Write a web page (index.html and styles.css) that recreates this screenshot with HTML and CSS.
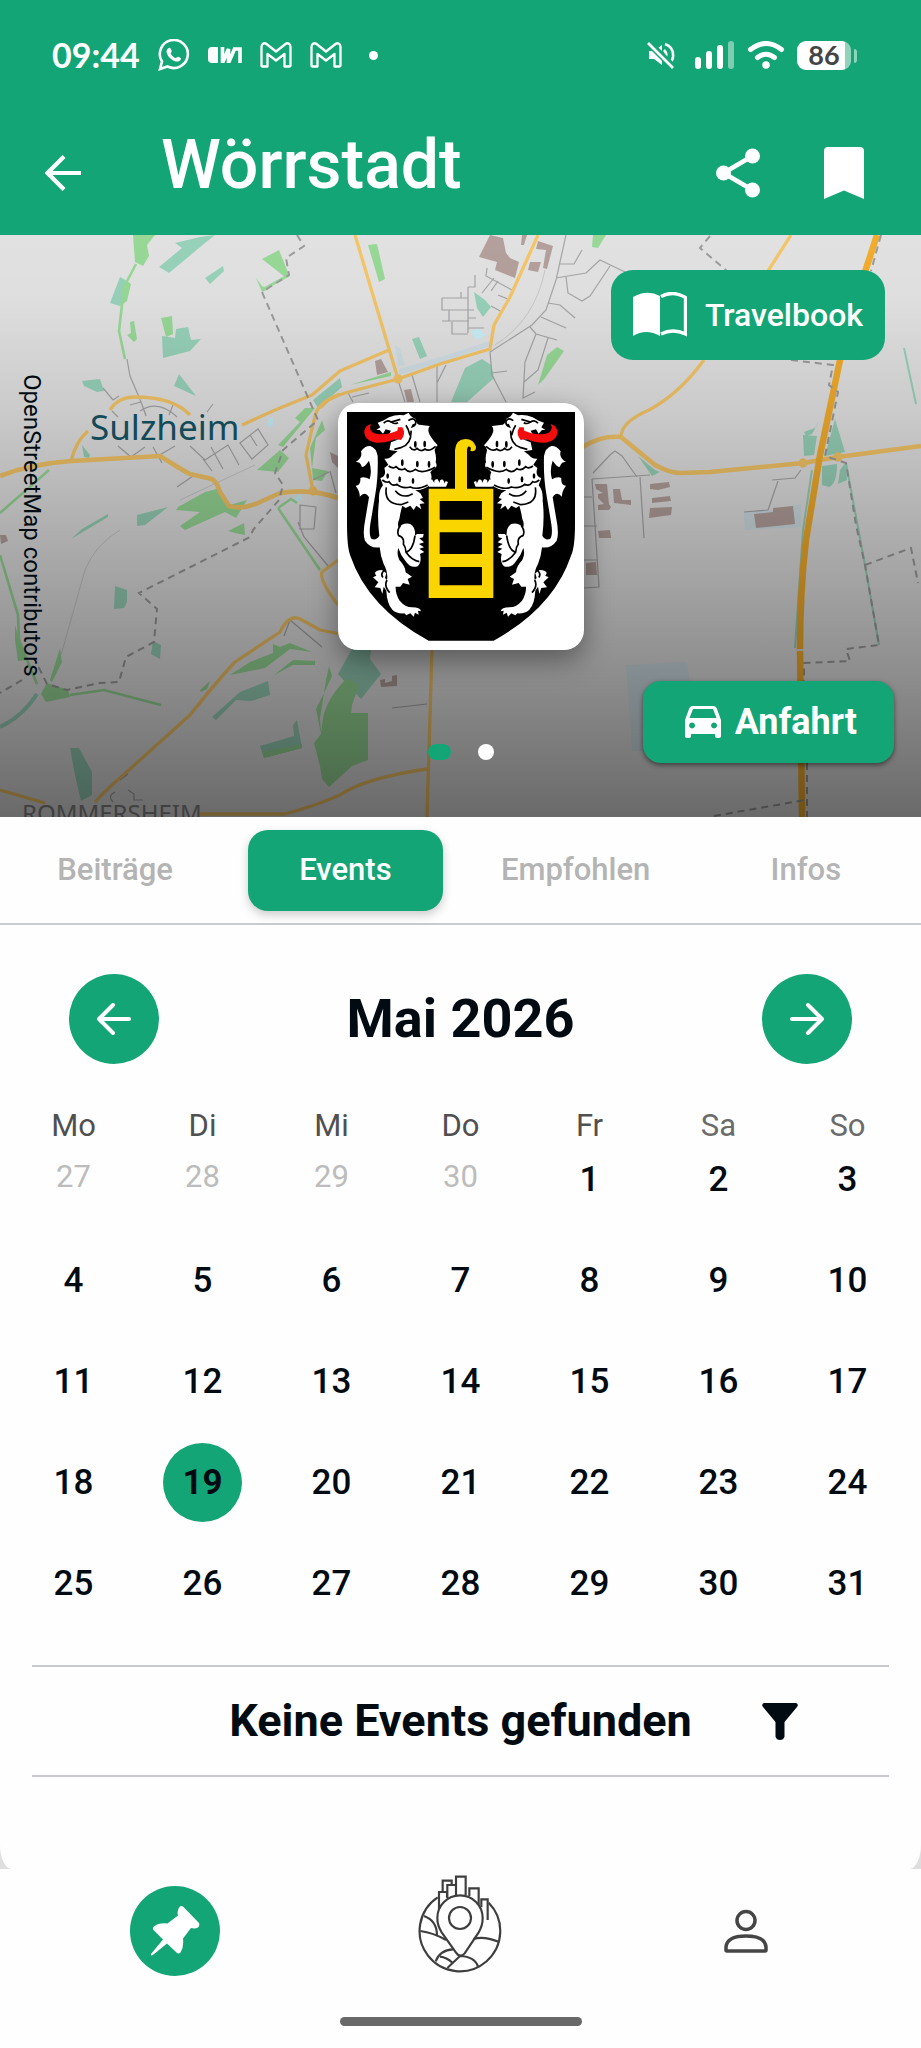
FILE: index.html
```html
<!DOCTYPE html>
<html lang="de">
<head>
<meta charset="utf-8">
<meta name="viewport" content="width=device-width, initial-scale=1">
<title>Wörrstadt</title>
<link rel="stylesheet" href="styles.css">
</head>
<body>
<header class="top">
  <div class="status">
    <div class="status-group">
      <span class="clock">09:44</span>
      <svg width="32" height="32" viewBox="0 0 32 32" fill="none" stroke="#fff" stroke-width="2.6"><path d="M2 30l2-7.500a14 14 0 1 1 5.500 5z"/><path d="M10 9.500c2-2 3 .5 3.700 2.500.4 1-1.300 2-.9 2.800 1 2 2.500 3.300 4.500 4.200 1 .4 1.900-1.800 3-1.300 2.600 1.200 3.500 1.600 2 3.500-1.600 2-5 1.500-7.500 0-3-1.800-5-4.200-6-7-.6-2-.2-3.500 1.200-4.700z" fill="#fff" stroke="none"/></svg>
      <svg width="34" height="16" viewBox="0 0 34 16" fill="#fff"><path d="M4 0h6v16H4a4 4 0 0 1-4-4V4a4 4 0 0 1 4-4z"/><path d="M14.500 0v16l6-14v14l6-14h5.500v14" fill="none" stroke="#fff" stroke-width="3.600"/></svg>
      <svg width="32" height="26" viewBox="0 0 32 26" fill="none" stroke="#fff" stroke-width="2.300" stroke-linejoin="round"><path d="M1.500 23V5c0-3.500 3-4.500 5-3L16 9.500 25.500 2c2-1.500 5-.5 5 3v18.500q0 1-1 1h-5V12L16 18.500 7.500 12v12.500h-5q-1 0-1-1z"/></svg>
      <svg width="32" height="26" viewBox="0 0 32 26" fill="none" stroke="#fff" stroke-width="2.300" stroke-linejoin="round"><path d="M1.500 23V5c0-3.500 3-4.500 5-3L16 9.500 25.500 2c2-1.500 5-.5 5 3v18.500q0 1-1 1h-5V12L16 18.500 7.500 12v12.500h-5q-1 0-1-1z"/></svg>
      <span class="more-dot"></span>
    </div>
    <div class="status-group status-right">
      <svg width="28" height="28" viewBox="0 0 28 28" fill="none" stroke="#fff" stroke-width="2.600"><path d="M2 10h5l8-6v20l-8-6H2z" fill="#fff" stroke="none"/><path d="M17 9q4 4 1 9M18 3q9 3 8 13-.5 3-2 5"/><path d="M0 0l28 28" stroke="#14a576" stroke-width="7"/><path d="M1 2l25 25"/></svg>
      <svg class="signal" width="40" height="28" viewBox="0 0 40 28" fill="#fff"><rect x="0" y="16" width="6" height="12" rx="3"/><rect x="11" y="10" width="6" height="18" rx="3"/><rect x="22" y="4" width="6" height="24" rx="3"/><rect x="33" y="0" width="6" height="28" rx="3" opacity=".45"/></svg>
      <svg width="38" height="28" viewBox="0 0 38 28" fill="none" stroke="#fff" stroke-width="5" stroke-linecap="round"><path d="M3.500 8.500q15.500-12 31 0M10.500 16.500q8.500-6.500 17 0"/><circle cx="19" cy="24" r="3.800" fill="#fff" stroke="none"/></svg>
      <span class="battery"><span class="battery-level">86</span></span>
    </div>
  </div>
  <div class="appbar">
    <button class="icon-btn back" aria-label="Zurück"><svg width="36" height="36" viewBox="0 0 36 36" fill="none" stroke="#fff" stroke-width="4.200"><path d="M36 18H3M19 1.500L2.500 18 19 34.500"/></svg></button>
    <h1>Wörrstadt</h1>
    <button class="icon-btn" aria-label="Teilen"><svg width="44" height="50" viewBox="0 0 44 50" fill="#fff"><path d="M36.500 8L7.500 25l29 17" fill="none" stroke="#fff" stroke-width="4.600"/><circle cx="36.500" cy="8" r="7.500"/><circle cx="7.500" cy="25" r="7.500"/><circle cx="36.500" cy="42" r="7.500"/></svg></button>
    <button class="icon-btn" aria-label="Merken"><svg width="40" height="52" viewBox="0 0 40 52" fill="#fff"><path d="M4 0h32q4 0 4 4v48l-20-8.500L0 52V4q0-4 4-4z"/></svg></button>
  </div>
</header>

<main>
<section class="hero">
  <svg class="map" viewBox="0 235 921 582" aria-label="Karte">
    <defs><linearGradient id="shade" x1="0" y1="0" x2="0" y2="1"><stop offset="0" stop-opacity="0"/><stop offset=".1" stop-opacity=".01"/><stop offset=".3" stop-opacity=".1"/><stop offset=".5" stop-opacity=".22"/><stop offset=".75" stop-opacity=".37"/><stop offset="1" stop-opacity=".53"/></linearGradient></defs>
    <rect y="235" width="921" height="582" fill="#e1e1e1"/>
    <g fill="#d0dfe5"><path d="M395 345l5 3 5 17-7 1zM626 665l61-3 3 20-40 1-5 68h-13zM744 512l29-2 28-6v23l-56 3z"/><path d="M399 369l48-14 46-15v5l-48 16-46 14z"/></g>
    <g fill="#c9eef7"><path d="M471 332l7-4 8 7-9 5zM268 419l5-2v8l-5 3zM295 497l6-3v6l-5 2zM48 694l8-1-1 5h-7z"/></g>
    <g fill="#97d1b9">
      <path d="M175 243l25-6 15-2-10 8-36 30-10-6 23-19zM223 266l1 5-14 13-5-6zM120 277l7 4-7 25-10-3zM162 336l13 2 1-9 12-2 3 13 10-1-11 12-27 7zM82 381l18-2 4 12-7 1-13-6zM179 374l17 22-22-10zM313 400l27-22 2 9-24 21zM82 445l8 10-1 3-5-1zM137 515l31-8-23 18-8 1zM82 529l26-15v3l-37 22zM474 292l11 8 6 7-8 10-6-9zM412 339l7-2 8 19-7 3zM451 402l14-34 17-9 9 6 3 13-27 24z"/>
      <path d="M804 432l11-4 6-10-9 16-6 2zM803 435l14 1-3 19-10 1zM835 419l10 33-20 4zM822 466l15-2q0 20-8 23l-7-2zM840 470l6-8 1 18-9 4zM638 456l17 14 5 2-8 4z"/>
      <path d="M115 586l12 4v12l-3 6-10 1zM153 641l8 4-1 14-9-5zM70 748h9l13 24v23l-11 6-6-26zM212 717l28-25 28-11 2 14-19 6-15-1-20 20zM260 746l34-10-1-11 4-5 5 28-38 10zM352 649h19l-1 10 11 15-20 25-23-25z"/>
      <path d="M0 727q22-10 37-33" fill="none" stroke="#97d1b9" stroke-width="4"/>
      <path d="M904 348l12 56M846 463l19 102 14 80M812 470l-9 60-8 118" fill="none" stroke="#97d1b9" stroke-width="2"/>
    </g>
    <g fill="#97d896">
      <path d="M133 235h22l-8 10 2 11-6 10-8-4zM127 281l4 3-4 17-7 5zM130 322l4-1 3 18-3 3-7-7 4-2zM161 318l11-2 1 18-7 3zM262 259l17-9 10 25-4 2zM256 278l6 8 7 3-7 3zM368 245l9-1 8 35-6 3zM593 235h13l-8 13-6-1zM538 385l9-30 10-8 7 4-19 27zM350 385l41-13v4zM295 418l10-10 10 0-32 39-5-2 22-23zM257 470l23-20 9 8-11 14zM322 420l3 10-9 8-4 30-2-20zM312 468l16 3-6 10-9-1zM178 507l27-15 12-3 13 16 17-5-11 18-11-6-40 18-5-4 20-14-24-2zM228 531l16-8 1 12-10-2zM15 625l5 17 7 18-9 1-3-21zM50 680l10-32 2 14-10 20zM41 694l6-11 21 7 2 7-24 5zM200 690l10-9-3 8-6 3zM230 675l20-13 23-9v-9l7 3 10-4 22 9-22-3-25 19zM274 675l19-15 22 1v4l-22 0zM262 752l40-8v4l-38 10zM329 666l3 10-6 13-10 20 5 25-7 9 6 23 2 13 7 8 23-21 16-6v-47h-17l1-8 7-20-12-7q-20 20-24 40l-2 15-1-15 6-38z"/>
      <path d="M136 264l-12 23-5 44 6 28M289 275l-27 15M0 513l49-43M278 508l13-9 6 4M278 508l42 62M0 555l18 60 1 25 18 44M70 695l34-5 57 15" fill="none" stroke="#97d896" stroke-width="2.600"/>
    </g>
    <g fill="#b3a09c"><path d="M490 235l13 3 3 15 4 5 9 4-4 16-20-8 2-8-18-5zM538 241l15 5-6 23-4-1 3-18-10-1zM530 262l11 0-3 10-10-2zM522 235h5l-3 10h-3zM375 361l6-2 7 13-11 3zM404 390l7-1 3 13h-7zM595 484h12l2 20 2 3-2 3-11 0v-5l6-1-6-6v-4l5-1-7-4zM613 489h7l2 11 9 0v5l-17-2zM650 484l19-2 1 5-12 3-8-1zM652 498l18-2 1 5-19 2zM650 508l22-1-1 8-22 3zM754 514l19-2V508l20-2 2 18-39 4zM598 531l12-1 1 8-12 0zM586 563l10-1 1 13h-11zM380 680l5-1v4l7-2v-5l5-1v11l-16 1zM330 452l8 4v12l-6-6zM0 535l6 0 2 6-7 3z"/></g>
    <g fill="none" stroke="#a5a5a8" stroke-width="1.200">
      <path d="M127 359l3 17 9 21 7 18M103 388l10 12 6-4M130 405l11-3 5 14M140 411q18-12 37 6M173 405l-4 10M207 412l6-8M112 411l6 6M118 446l13 11 14-10M153 447l9 16M158 456l17-10M190 446l15 14 23-15 11 20M203 459l9 12M211 447l12 22M240 443l18-14 10 16-16 14zM250 435l7 11M177 487l16-11M313 480l16-8M330 471l6 22M300 505l16 2-2 22-14 0zM298 522l6 15 25 30"/>
      <path d="M566 235l-10 45-10 30-14 15-42 27 2 23 14 27M556 278l30-5 14-13 25 12M566 277l2 16 14 8 8-5 20-30M560 264l14 0 8-14M548 303l12 2 15 13M541 317l25 11M530 327l6 7 21 6M536 334l-11 28-2 36 12-6M548 338l-10 32-14 12M492 373l15-2M468 287v46M442 298h26M442 298v12h32M449 310v11h20M442 321h7M452 322v12h16M468 318h8M468 328h16M475 275v12h-7M487 268l-1 8 26 14M494 278l-12 15M498 281l-7 10M498 295l12 5M491 306l11 6M461 292v6M398 380l7 22M412 375l8 27M437 366v36M446 365l-9 18M348 393l5 9M352 397l17-4"/>
      <path d="M593 473l17-18 5-4 7 5 15 21M592 479l58-4M592 479l7 108-16 1M640 477l4 61M772 480l23-2 6-8M778 481l-10 29-24 2M583 560h14M592 497h-9M583 526h14M290 620l32 27M290 620l-6 16M392 708l35-4M115 792q-8 4-2 10M128 790l6 4v6l9 0M120 780l8-6"/>
    </g>
    <g fill="none" stroke="#c7c7c7"><path d="M61 655L85 570q10-25 35-40M180 500l75-35M495 345q40-25 50-75"/></g>
    <g fill="none" stroke="#f4c566" stroke-width="3.300" stroke-linejoin="round">
      <path d="M110 410q8-13 25-13 38 0 55 18M88 431q-12 10-17 30M242 425l33-15 37-15 28-24 49-21M340 394q-22 8-25 22l-9 39 7 36M355 235l43 144M320 408q8-10 25-15l53-14 42-15 50-15 4-24 16-28 28-62M791 235l-23 36M704 360q-25 34-55 50-28 12-28 27M338 560l-16 12q-3 8 16 33M0 790l45 13M95 802q13-14 25-24l70-63q28-35 45-53l45-30q10-20 22-12l18 10 20 4M432 649l-5 168M200 814h85q27-7 55-19 25-17 87-26"/>
      <g stroke-width="4.600"><path d="M0 476q30-12 71-15l89-5q22 14 30 18l22 5q5 3 8 13l9 14q15 4 31-4l20-9q30-5 58 5M583 447q18-12 38-10l34 28q15 8 25 8l30-1 93-9 35-6 83-11"/></g>
      <circle cx="398" cy="379" r="3"/><circle cx="803" cy="463" r="3"/><circle cx="838" cy="457" r="3"/><circle cx="313" cy="491" r="3"/>
    </g>
    <path d="M877 235l-12 37-25 88-20 95-14 85q-6 50-6 110l2 167" fill="none" stroke="#f2ac2c" stroke-width="6.500"/>
    <path d="M797 650h7" stroke="#ddd" stroke-width="2"/>
    <g fill="none" stroke="#9b9b9b" stroke-width="2" stroke-dasharray="7 5"><path d="M297 235l7 11-18 12 3 17-27 17 51 117 5 11-35 30-8 23 8 12-4 15-26 30-3 7-111 56 18 16-3 33-28 15-7 25-19 1-33 7-20-6-10-20M22 680l-22 13M881 235l-10 36M710 236l-10 12 27 23M791 360l42 5-4 20 9 7-13 64 21 7 10 62 9 40 14 80-33 4 4 12-46 2v20M865 565l46-17 7 35M807 763v54M714 816l91-16"/></g>
    <text x="22" y="822" class="map-village">ROMMERSHEIM</text>
    <rect y="235" width="921" height="582" fill="url(#shade)"/>
    <text x="90" y="440" class="map-town">Sulzheim</text>
  </svg>
  <p class="attribution">OpenStreetMap contributors</p>
  <button class="travelbook">
    <svg width="54" height="46" viewBox="0 0 54 46"><path d="M0 5Q14-3 27 4V44Q13 36 0 44z" fill="#fff"/><path d="M28 4.500Q40-2 52.500 5.500V42Q40 36 28 42" fill="none" stroke="#fff" stroke-width="3.400"/></svg>
    Travelbook
  </button>
  <div class="crest">
    <svg viewBox="80 64 684 686" aria-label="Wappen Wörrstadt">
      <path d="M80 64H764V400Q764 470 752 495Q700 650 520 750H325Q142 650 90 495Q80 470 80 400z"/>
      <g id="lion">
        <path fill="#fff" d="M265 66Q270 78 285 84Q287 98 296 102L328 106Q320 118 328 132Q335 145 352 164Q340 172 344 184Q349 200 346 214Q352 226 345 232Q336 236 330 245Q336 255 332 268L328 284Q308 300 285 298L300 308 308 322 298 325 313 338 298 340 303 356 288 345 280 358 270 345 256 352 246 345Q240 365 237 385Q230 400 235 412Q248 395 270 400Q286 410 284 435L290 430 310 430 308 440 297 443 311 455 296 460 311 470 297 474 312 484 299 490Q305 515 292 527Q270 534 255 510Q240 492 234 472Q228 490 237 508Q256 528 256 545L275 558 262 565 268 582 248 577 240 588 226 588Q225 610 238 630Q255 650 275 650Q300 650 302 662L293 660 295 672 284 666 280 678 270 668 258 674 252 668Q230 670 216 657Q200 640 198 600L190 588 186 610 180 592 163 590 174 575 158 560 168 555Q155 540 185 538L198 548 194 562 200 568Q204 545 190 520Q180 495 178 470Q150 474 134 450Q126 430 135 385L146 320Q135 300 118 318Q120 305 106 285Q122 285 120 262Q132 256 148 266Q156 240 146 210Q125 240 122 222Q118 212 106 214Q128 202 122 182Q134 165 150 166Q168 172 172 196Q174 260 165 310L150 400Q145 435 154 445Q168 450 177 435Q170 380 176 330Q174 300 188 284L180 262Q200 258 192 232L204 222 192 204Q208 206 218 192L232 182 207 178 212 155 238 145Q215 148 205 142Q205 128 212 120L196 116 188 129 178 118 168 118 180 110 172 96 188 90 206 80Q230 70 250 74z"/>
        <path fill="#fff" d="M326 288Q320 270 335 266L342 277Q340 264 352 266L358 277Q357 265 368 267L374 279Q372 268 383 274L377 288z"/>
        <path fill="none" stroke="#000" stroke-width="5" d="M190 98q10-12 22-4l28-8M213 94q8 8 20 2M264 90q15-12 22 2 2 12-10 16l4-8M272 120q2 40-28 50l-22 6M257 104q8 12 12 30M268 168q12 16 22 5 12 12 24 2 12 10 32-8M205 226q14 10 22 2 12 14 26 6 15 16 32 2 20 16 60-6M186 268q12 10 20 5 10 16 24 8 15 14 40 8 20 10 52-6M198 290q-8 50 44 52l22-8M225 300q15 20 40 15l12-6M240 405q-12 15-5 30 18 5 14 25 8 10 8 25 18 25 40 28M284 435q-6 45-28 50M190 540q-10 12-2 20M200 568q-10 18 8 38"/>
        <g><ellipse cx="246" cy="216" rx="4" ry="10"/><ellipse cx="291" cy="220" rx="4" ry="10"/><ellipse cx="326" cy="221" rx="4" ry="10"/><ellipse cx="285" cy="161" rx="4" ry="10"/><ellipse cx="313" cy="160" rx="4" ry="10"/><ellipse cx="202" cy="256" rx="4" ry="8"/><ellipse cx="238" cy="266" rx="4" ry="9"/><ellipse cx="278" cy="271" rx="4" ry="9"/></g>
        <path fill="#f30d0d" d="M246 110Q258 130 242 148L226 144Q200 157 168 156Q130 149 132 120Q136 104 152 100Q144 116 158 126Q180 135 212 127L231 120 233 110z"/>
      </g>
      <use href="#lion" transform="matrix(-1 0 0 1 843 0)"/>
      <path fill="#fbd500" fill-rule="evenodd" d="M325 294H404V178Q406 146 436 145Q460 146 467 168Q468 184 450 181Q455 166 443 168Q440 172 440 182V294H519V622H325zM358 331V387H485V331zM358 425V490H485V425zM358 529V584H485V529z"/>
    </svg>
  </div>
  <div class="dots"><span class="dot-active"></span><span class="dot"></span></div>
  <button class="directions">
    <svg width="36" height="32" viewBox="0 0 36 32"><path fill="#fff" fill-rule="evenodd" d="M8 0h20q3 0 4 3l4 11v16q0 2-2 2h-2q-2 0-2-2v-2H6v2q0 2-2 2H2q-2 0-2-2V14L4 3q1-3 4-3zM8 3L4.500 12h27L28 3zM7 16.500a3 3 0 1 0 .1 0zM29 16.500a3 3 0 1 0 .1 0z"/></svg>
    Anfahrt
  </button>
</section>

<nav class="tabs" aria-label="Bereiche">
  <button>Beiträge</button>
  <button class="active">Events</button>
  <button>Empfohlen</button>
  <button>Infos</button>
</nav>

<div class="content">
<section class="calendar">
  <div class="month">
    <button class="round" aria-label="Vorheriger Monat"><svg width="34" height="34" viewBox="0 0 34 34" fill="none" stroke="#fff" stroke-width="4" stroke-linecap="round" stroke-linejoin="round"><path d="M32 17H2M16 3L2 17l14 14"/></svg></button>
    <h2>Mai 2026</h2>
    <button class="round" aria-label="Nächster Monat"><svg width="34" height="34" viewBox="0 0 34 34" fill="none" stroke="#fff" stroke-width="4" stroke-linecap="round" stroke-linejoin="round"><path d="M2 17h30M18 3l14 14-14 14"/></svg></button>
  </div>
  <table class="days">
    <thead><tr><th>Mo</th><th>Di</th><th>Mi</th><th>Do</th><th>Fr</th><th class="weekend">Sa</th><th class="weekend">So</th></tr></thead>
    <tbody>
      <tr><td><button class="muted">27</button></td><td><button class="muted">28</button></td><td><button class="muted">29</button></td><td><button class="muted">30</button></td><td><button>1</button></td><td><button>2</button></td><td><button>3</button></td></tr>
      <tr><td><button>4</button></td><td><button>5</button></td><td><button>6</button></td><td><button>7</button></td><td><button>8</button></td><td><button>9</button></td><td><button>10</button></td></tr>
      <tr><td><button>11</button></td><td><button>12</button></td><td><button>13</button></td><td><button>14</button></td><td><button>15</button></td><td><button>16</button></td><td><button>17</button></td></tr>
      <tr><td><button>18</button></td><td><button class="today">19</button></td><td><button>20</button></td><td><button>21</button></td><td><button>22</button></td><td><button>23</button></td><td><button>24</button></td></tr>
      <tr><td><button>25</button></td><td><button>26</button></td><td><button>27</button></td><td><button>28</button></td><td><button>29</button></td><td><button>30</button></td><td><button>31</button></td></tr>
    </tbody>
  </table>
</section>
<section class="results">
  <h3>Keine Events gefunden</h3>
  <button class="filter" aria-label="Filtern"><svg width="36" height="37" viewBox="0 0 36 37" fill="#020b12"><path d="M2 0h32q3 1 1 4L22.500 19v14.500q-1 3.500-4.500 3.500t-4.500-3.500V19L1 4Q-1 1 2 0z"/></svg></button>
</section>
</div>
</main>

<footer class="bottom">
  <nav class="bottom-nav" aria-label="Hauptmenü">
    <a class="round" href="#orte" aria-label="Orte"><svg width="50" height="50" viewBox="0 0 50 50" fill="#fff"><path d="M30 0.500Q32-.5 33.500 1L49 17Q50 20 48 21.500 45 23 41 22L33 32.500Q34 41 30.500 46.500 28.500 48.500 26.500 46.500L17 37.500 3.500 48.500Q.5 50.500 1 48L13 33.500 3.500 24Q2 22 4 20.500 9 16.500 17.500 17.500L28 9.500Q26.500 4 30 .5z"/></svg></a>
    <a class="globe" href="#karte" aria-label="Karte"><svg width="84" height="100" viewBox="84 40 252 300" fill="none" stroke="#3e3e3e" stroke-width="6.500"><path d="M143 110A121 121 0 1 0 296 126"/><path d="M210 285Q203 284 198 276L155 215Q142 195 142 172A68 68 0 0 1 278 172Q278 195 266 215L224 278Q218 285 210 285z"/><circle cx="210" cy="172" r="33"/><path d="M147 145V94H171V110M158 93V60H185V72M172 112V73H198V104M198 104V48H227V104M238 106V83H266V132M274 140V116H293V178M102 166Q140 180 141 222M91 211Q130 216 168 238M250 235Q280 225 326 243M189 266Q150 268 137 302M150 288Q170 290 187 306M172 322L210 286Q255 288 264 318"/></svg></a>
    <a href="#profil" aria-label="Profil"><svg width="44" height="44" viewBox="0 0 44 44" fill="none" stroke="#454545" stroke-width="3.500"><circle cx="22" cy="11.500" r="9"/><path d="M2 41V38Q3 27 22 27T42 38V41Q42 42 41 42H3Q2 42 2 41z"/></svg></a>
  </nav>
  <div class="home-bar"></div>
</footer>
</body>
</html>
```
FILE: styles.css
```css
:root { --green: #14a576; --ink: #020b12; --line: #c9c9d0; }
* { box-sizing: border-box; }
body { margin: 0; min-height: 100vh; display: flex; flex-direction: column; background: #fefefe; color: var(--ink); font-family: Roboto, "Liberation Sans", sans-serif; }
h1, h2, h3, p { margin: 0; }
button { font: inherit; color: inherit; background: none; border: 0; padding: 0; }
svg { display: block; flex: none; }

.top { background: var(--green); color: #fff; }
.status { display: flex; justify-content: space-between; align-items: center; height: 110px; padding: 0 70px 0 52px; }
.status-group { display: flex; align-items: center; gap: 18px; }
.status-right { gap: 12px; }
.signal { margin-left: 8px; }
.clock { font: bold 34px/40px Lato, sans-serif; }
.more-dot { width: 9px; height: 9px; margin-left: 9px; border-radius: 50%; background: #fff; }
.battery { position: relative; width: 54px; height: 29px; border-radius: 9px; background: linear-gradient(90deg, #fff 88%, #8fd3bb 88%); color: #444; text-align: center; }
.battery::after { content: ""; position: absolute; right: -6px; top: 8px; width: 3px; height: 14px; border-radius: 0 3px 3px 0; background: #8fd3bb; }
.battery-level { display: block; font: bold 27px/28px Lato, sans-serif; }
.appbar { display: flex; align-items: center; height: 125px; padding: 0 57px 0 45px; gap: 64px; }
.appbar h1 { flex: 1; padding: 0 0 16px 16px; font-size: 68px; line-height: 80px; font-weight: 500; }

.hero { position: relative; }
.map { width: 100%; height: auto; }
.map-town { font: 35px "Noto Sans", sans-serif; fill: #134a58; }
.map-village { font: 24px "Noto Sans", sans-serif; fill: #858585; }
.attribution { position: absolute; left: 18px; top: 139px; writing-mode: vertical-rl; font-size: 24px; line-height: 28px; }
.travelbook, .directions { position: absolute; display: flex; align-items: center; justify-content: center; background: var(--green); color: #fff; }
.travelbook { top: 35px; right: 36px; height: 90px; padding: 0 22px; gap: 18px; border-radius: 22px; font-size: 32px; font-weight: 500; }
.directions { right: 27px; bottom: 54px; height: 82px; padding: 0 37px 0 42px; gap: 14px; border-radius: 18px; font-size: 36px; font-weight: 700; box-shadow: 0 2px 5px rgba(0, 0, 0, .5); }
.crest { position: absolute; left: 50%; top: 168px; width: 246px; padding: 9px; transform: translateX(-50%); border-radius: 20px; background: #fff; box-shadow: 0 10px 28px rgba(0, 0, 0, .4); }
.crest svg { width: 100%; height: auto; }
.dots { position: absolute; left: 0; right: 0; bottom: 57px; display: flex; justify-content: center; gap: 27px; }
.dot, .dot-active { width: 16px; height: 16px; border-radius: 8px; background: #fff; }
.dot-active { width: 23px; background: var(--green); }

.tabs { display: grid; grid-template-columns: repeat(4, 1fr); padding: 13px 0 12px; border-bottom: 2px solid var(--line); }
.tabs button { height: 81px; margin: 0 18px; padding-bottom: 3px; border-radius: 20px; color: #b4b4b4; font-size: 31px; font-weight: 500; }
.tabs .active { background: var(--green); color: #fff; box-shadow: 0 4px 10px rgba(0, 0, 0, .2); }

main { background: #dedede; }
.tabs, .content { background: #fefefe; }
.content { padding-bottom: 92px; border-radius: 0 0 12px 12px / 0 0 24px 24px; }
.calendar { padding: 49px 9px 20px; }
.month { display: flex; align-items: center; justify-content: space-between; padding: 0 60px 48px; }
.month h2 { font-size: 54px; line-height: 60px; font-weight: 700; }
.round { display: flex; align-items: center; justify-content: center; width: 90px; height: 90px; border-radius: 50%; background: var(--green); }
.days { width: 100%; table-layout: fixed; border-collapse: collapse; text-align: center; }
.days th { padding: 0; height: 28px; font-size: 31px; line-height: 28px; font-weight: 400; color: #505050; }
.days .weekend { color: #6b6b6b; }
.days td { padding: 0 0 22px; }
.days button { display: block; width: 79px; height: 79px; margin: 0 auto; border-radius: 50%; font-size: 35px; font-weight: 500; }
.days .muted { padding-bottom: 6px; font-size: 31px; font-weight: 400; color: #bcbcbc; }
.days .today { background: var(--green); font-weight: 700; }
.results { display: grid; grid-template-columns: 1fr auto 1fr; align-items: center; height: 112px; margin: 0 32px; border: solid var(--line); border-width: 2px 0; }
.results h3 { grid-column: 2; font-size: 45px; line-height: 54px; font-weight: 700; }
.filter { justify-self: start; margin-left: 70px; }

.bottom { flex: 1; display: flex; flex-direction: column; justify-content: space-between; align-items: center; padding-bottom: 22px; background: #fefefe; }
.bottom-nav { display: grid; grid-template-columns: repeat(3, 1fr); place-items: center; width: 100%; height: 124px; padding: 0 32px; }
.globe { margin-bottom: 14px; }
.home-bar { width: 242px; height: 9px; border-radius: 5px; background: #686868; }
```
